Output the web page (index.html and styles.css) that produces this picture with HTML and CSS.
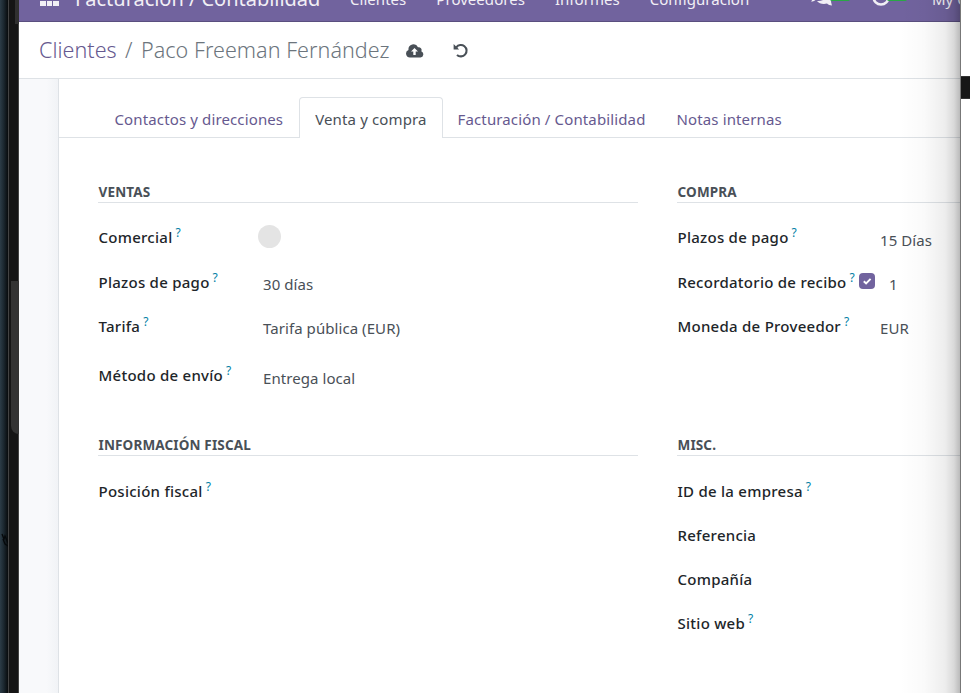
FILE: index.html
```html
<!DOCTYPE html>
<html lang="es">
<head>
<meta charset="utf-8">
<title>Paco Freeman Fernández</title>
<link rel="stylesheet" href="styles.css">
</head>
<body>
<div class="desktop">
  <aside class="edge-left">
    <div class="wallpaper"><svg width="8" height="14" viewBox="0 0 8 14"><path d="M2 1l2 5 1-3 3 7M3 6l2 5 3 2" fill="none" stroke="#05080a" stroke-width="1.3"/></svg></div>
    <div class="frame"><div class="frame-top"></div><div class="frame-dark"></div><div class="thumb"></div></div>
  </aside>
  <main class="window">
    <header class="navbar">
      <svg class="apps" width="20" height="20" viewBox="0 0 20 20" fill="#f1eff5"><path d="M0 0h6v5H0zM7 0h5v5H7zM13 0h6v5h-6zM0 7h6v5H0zM7 7h5v5H7zM13 7h6v5h-6zM0 14h6v5H0zM7 14h5v5H7zM13 14h6v5h-6z"/></svg>
      <span class="brand">Facturación / Contabilidad</span>
      <nav class="menu"><span>Clientes</span><span>Proveedores</span><span>Informes</span><span>Configuración</span></nav>
      <div class="systray">
        <span class="tray"><svg width="22" height="18" viewBox="0 0 22 18" fill="#f1eff5"><path d="M8 0c4.500 0 8 2.600 8 5.500s-3.500 6-8 6l-3 0c-1.500 1.500-3 2-5 2 1-1 1.500-2 1.500-3C0 10 0 8 0 6c0-3.400 3.500-6 8-6z"/><path d="M17 4c3 1 5 3 5 5 0 2-1 3-2 4 0 1 .5 3 1 4.500-2 0-4-.8-5-2-4 1-8 0-10-2.500 6 .5 11-3 11-9z"/></svg><i class="badge"></i></span>
        <span class="tray"><svg width="18" height="18" viewBox="0 0 18 18" fill="none" stroke="#f1eff5" stroke-width="2.600"><circle cx="9" cy="9" r="7.500"/><path d="M9 4v4H6"/></svg><i class="badge"></i></span>
        <span class="company">My Company</span>
      </div>
    </header>
    <div class="control">
      <span class="crumb link">Clientes</span><span class="crumb slash">/</span><span class="crumb name">Paco Freeman Fernández</span>
      <svg class="cloud" width="18" height="14" viewBox="0 0 18 14"><path fill="#495057" d="M4.200 13.500A3.900 3.900 0 0 1 2.500 6a5 5 0 0 1 9.500-2.700 2.800 2.800 0 0 1 3.300 3.900 3.300 3.300 0 0 1-.8 6.300z"/><path fill="#fff" d="M8.500 4L5 7.500h2.300V11h2.400V7.500H12z"/></svg>
      <svg class="undo" width="15" height="15" viewBox="0 0 15 15"><path d="M3.300 4.300A5.700 5.700 0 1 1 4 11.900" fill="none" stroke="#495057" stroke-width="2.100"/><path d="M.6.900v5.500h5.500z" fill="#495057"/></svg>
    </div>
    <div class="content">
      <div class="gutter"></div>
      <section class="sheet">
        <div class="tabs"><span class="tab">Contactos y direcciones</span><span class="tab active">Venta y compra</span><span class="tab">Facturación / Contabilidad</span><span class="tab">Notas internas</span></div>
        <div class="groups">
          <section class="group">
            <h2>Ventas</h2>
            <div class="row first"><label>Comercial<sup>?</sup></label><i class="avatar"></i></div>
            <div class="row"><label>Plazos de pago<sup>?</sup></label><span class="value">30 días</span></div>
            <div class="row"><label>Tarifa<sup>?</sup></label><span class="value">Tarifa pública (EUR)</span></div>
            <div class="row shipping"><label>Método de envío<sup>?</sup></label><span class="value">Entrega local</span></div>
          </section>
          <section class="group wide">
            <h2>Compra</h2>
            <div class="row first"><label>Plazos de pago<sup>?</sup></label><span class="value">15 Días</span></div>
            <div class="row"><label class="reminder">Recordatorio de recibo<sup>?</sup></label><svg class="check" width="16" height="16" viewBox="0 0 16 16"><rect width="16" height="16" rx="4" fill="#71639e"/><path d="M4.800 8.200l2.300 2.200 4.500-4.500" fill="none" stroke="#fff" stroke-width="2"/></svg><span class="value days">1</span></div>
            <div class="row"><label>Moneda de Proveedor<sup>?</sup></label><span class="value">EUR</span></div>
          </section>
          <section class="group lower">
            <h2>Información fiscal</h2>
            <div class="row"><label>Posición fiscal<sup>?</sup></label></div>
          </section>
          <section class="group lower wide">
            <h2>Misc.</h2>
            <div class="row"><label>ID de la empresa<sup>?</sup></label></div>
            <div class="row"><label>Referencia</label></div>
            <div class="row"><label>Compañía</label></div>
            <div class="row"><label>Sitio web<sup>?</sup></label></div>
          </section>
        </div>
      </section>
    </div>
    <div class="shade"></div>
  </main>
  <aside class="edge-right"><div class="bar"></div></aside>
</div>
</body>
</html>
```

FILE: styles.css
```css
* { box-sizing: border-box; }
body { margin: 0; background: #fff; font-family: "Noto Sans", "Open Sans", sans-serif; font-size: 15px; color: #495057; }
.desktop { display: flex; width: 970px; height: 693px; overflow: hidden; }
.edge-left { display: flex; width: 19px; background: #111; }
.wallpaper { width: 8px; padding-top: 531px; background: linear-gradient(90deg, #2c3c47, #1c2830 45%, #080b0d); overflow: hidden; }
.frame { width: 11px; padding-left: 3px; background: linear-gradient(90deg, #444 0 1px, #151515 1px 10px, #444 10px); }
.frame-top { height: 24px; margin-left: 4px; background: #303030; }
.frame-dark { height: 257px; }
.thumb { height: 153px; background: #333; border-bottom-left-radius: 8px; }
.window { position: relative; width: 942px; overflow: hidden; border-right: 1px solid #777; background: #fff; display: flex; flex-direction: column; }
.navbar { height: 46px; margin-top: -24px; flex: none; display: flex; align-items: center; padding-left: 21px; background: #71639e; border-bottom: 1px solid #5a4f7f; color: #f1eff5; white-space: nowrap; }
.navbar > * { flex: none; }
.apps { margin-top: -3px; }
.brand { width: 275px; margin-left: 15px; font-size: 20px; letter-spacing: -.03px; }
.menu { display: flex; gap: 30px; width: 461px; font-size: 15px; letter-spacing: .04px; }
.systray { display: flex; align-items: center; }
.tray { display: flex; align-items: flex-end; width: 61px; height: 18px; margin-top: -3px; }
.badge { width: 20px; height: 15px; margin-left: -3px; margin-bottom: 5px; border-radius: 2px; background: #28a745; }
.company { margin-left: -1px; font-size: 15px; }
.control { height: 57px; flex: none; display: flex; align-items: center; padding-left: 20px; border-bottom: 1px solid #dee2e6; }
.crumb { font-size: 21.500px; line-height: 30px; white-space: nowrap; letter-spacing: .05px; font-weight: 350; }
.link { color: #66598f; width: 86px; }
.slash { color: #6c757d; width: 16px; }
.name { color: #6c757d; width: 265px; }
.cloud { margin-top: 1px; margin-right: 29px; }
.undo { margin-top: 1px; }
.content { display: flex; flex: 1; }
.gutter { width: 39px; flex: none; background: linear-gradient(90deg, #f8f9fb 70%, #f1f3f6); }
.sheet { flex: none; width: 1240px; border-left: 1px solid #dee2e6; }
.tabs { height: 59px; display: flex; align-items: flex-end; padding-left: 39.500px; border-bottom: 1px solid #dee2e6; }
.tab { height: 41px; margin-bottom: -1px; padding: 0 15px; line-height: 43px; border: 1px solid transparent; border-bottom: 0; color: #66598f; white-space: nowrap; letter-spacing: .13px; }
.active { background: #fff; color: #495057; border-color: #dee2e6; border-radius: 4px 4px 0 0; }
.active ~ .tab { margin-left: -1px; }
.groups { display: grid; grid-template-columns: 540px 540px; grid-template-rows: 253px auto; column-gap: 39px; padding: 42px 0 0 39px; }
h2 { height: 23px; margin: 0 0 12px; border-bottom: 1px solid #dee2e6; font-size: 13.500px; line-height: 24px; font-weight: 700; letter-spacing: .15px; text-indent: .5px; text-transform: uppercase; }
.lower h2 { margin-bottom: 13px; }
.row { height: 44px; display: flex; align-items: center; }
.first { height: 45px; padding-bottom: 2px; }
.shipping { margin-top: 5px; }
label { width: 165px; padding-left: .5px; line-height: 20px; color: #212529; font-weight: 500; letter-spacing: .26px; white-space: nowrap; }
.wide label { width: 203px; }
sup { margin-left: 3px; color: #0180a5; font-size: 12px; line-height: 0; vertical-align: 6px; font-weight: 400; }
.value { padding-top: 4px; line-height: 20px; letter-spacing: .07px; }
.first .value { padding-top: 6px; }
.shipping .value { padding-top: 6px; }
.avatar { width: 23px; height: 23px; margin: -1px 0 0 -5px; border-radius: 50%; background: #e4e4e4; }
.wide .reminder { width: 182px; }
.check { margin-top: -2px; }
.days { margin-left: 14px; }
.shade { position: absolute; inset: 0 0 0 auto; width: 60px; background: linear-gradient(90deg, transparent, rgba(0,0,0,.02) 40%, rgba(0,0,0,.07) 75%, rgba(0,0,0,.15) 90%, rgba(0,0,0,.27)); }
.edge-right { width: 9px; padding-top: 76px; background: #fff; }
.bar { height: 23px; background: #171717; border-top: 1px solid #333; border-bottom: 1px solid #333; }
```
